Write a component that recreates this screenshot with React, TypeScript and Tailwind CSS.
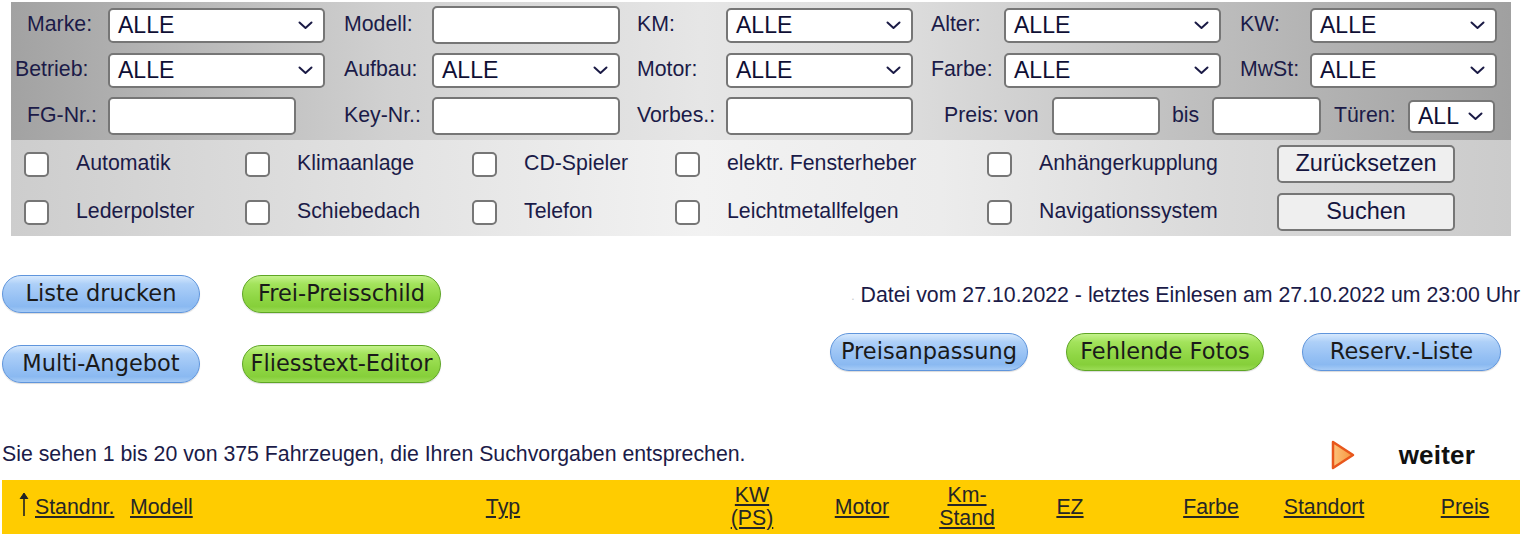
import React from "react";

const Chevron = () => (
  <svg width="15" height="9" viewBox="0 0 15 9" className="shrink-0">
    <polyline points="1.5,1.5 7.5,7 13.5,1.5" fill="none" stroke="#1a1a45" strokeWidth="2" strokeLinecap="round" strokeLinejoin="round" />
  </svg>
);

function Label({ cls, children }: { cls: string; children: React.ReactNode }) {
  return <div className={`shrink-0 text-[21.3px] text-[#1b1b48] whitespace-nowrap ${cls}`}>{children}</div>;
}

function Sel({ cls, text = "ALLE" }: { cls: string; text?: string }) {
  return (
    <div className={`shrink-0 flex items-center justify-between bg-white border-2 border-[#767676] rounded-[5px] pl-[8px] pr-[10px] ${cls}`}>
      <span className="text-[23px] text-[#0f0f35] leading-none">{text}</span>
      <Chevron />
    </div>
  );
}

function Inp({ cls }: { cls: string }) {
  return <div className={`shrink-0 bg-white border-2 border-[#767676] rounded-[5px] ${cls}`} />;
}

function Check({ cls, label }: { cls: string; label: string }) {
  return (
    <div className={`shrink-0 flex items-center ${cls}`}>
      <div className="w-[25px] h-[25px] bg-white border-2 border-[#767676] rounded-[5px]" />
      <span className="ml-[27px] text-[21.3px] text-[#1b1b48] whitespace-nowrap">{label}</span>
    </div>
  );
}

function Pill({ label, green, cls = "" }: { label: string; green?: boolean; cls?: string }) {
  const color = green
    ? "border-[#5ea624] bg-[linear-gradient(180deg,#c4f28c_0%,#a3e35c_22%,#8fd644_60%,#86cf3a_85%,#9bdc55_100%)]"
    : "border-[#5f95dc] bg-[linear-gradient(180deg,#d7e9fd_0%,#aed0f8_22%,#97c1f4_60%,#8ab9f1_85%,#a6cbf6_100%)]";
  return (
    <div
      className={`h-[38px] rounded-full border flex items-center justify-center font-['DejaVu_Sans',sans-serif] text-[22.5px] tracking-[0px] text-[#1a1a1a] shadow-[0_1px_1px_rgba(0,0,0,0.15)] ${color} ${cls}`}
    >
      {label}
    </div>
  );
}

function Arrow() {
  return (
    <svg width="12" height="26" viewBox="0 0 12 26" className="inline-block mr-[5px] -mt-[8px] align-middle">
      <line x1="6" y1="3" x2="6" y2="25" stroke="#222" strokeWidth="1.6" />
      <polyline points="2,8 6,2 10,8" fill="#222" stroke="#222" strokeWidth="1" />
    </svg>
  );
}

export default function App() {
  return (
    <div className="w-[1524px] h-[541px] bg-white overflow-hidden font-['Liberation_Sans',Arial,sans-serif]">
      {/* Filter panel */}
      <div className="ml-[11px] mt-[2px] w-[1500px]">
        <div className="pt-[4px] pb-[5px] bg-[linear-gradient(90deg,#a2a2a2_0%,#d0d0d0_25%,#e6e6e6_46%,#dcdcdc_60%,#c0c0c0_78%,#a0a0a0_100%)]">
          <div className="flex items-center h-[38px]">
            <Label cls="w-[97px] pl-[16px]">Marke:</Label>
            <Sel cls="w-[217px] h-[35px]" />
            <Label cls="w-[107px] pl-[19px]">Modell:</Label>
            <Inp cls="w-[188px] h-[38px]" />
            <Label cls="w-[106px] pl-[17px]">KM:</Label>
            <Sel cls="w-[187px] h-[35px]" />
            <Label cls="w-[91px] pl-[18px]">Alter:</Label>
            <Sel cls="w-[217px] h-[35px]" />
            <Label cls="w-[89px] pl-[19px]">KW:</Label>
            <Sel cls="w-[187px] h-[35px]" />
          </div>
          <div className="flex items-center h-[38px] mt-[7px]">
            <Label cls="w-[97px] pl-[4px]">Betrieb:</Label>
            <Sel cls="w-[217px] h-[35px]" />
            <Label cls="w-[107px] pl-[19px]">Aufbau:</Label>
            <Sel cls="w-[188px] h-[35px]" />
            <Label cls="w-[106px] pl-[17px]">Motor:</Label>
            <Sel cls="w-[187px] h-[35px]" />
            <Label cls="w-[91px] pl-[18px]">Farbe:</Label>
            <Sel cls="w-[217px] h-[35px]" />
            <Label cls="w-[89px] pl-[19px]">MwSt:</Label>
            <Sel cls="w-[187px] h-[35px]" />
          </div>
          <div className="flex items-center h-[38px] mt-[8px]">
            <Label cls="w-[97px] pl-[16px]">FG-Nr.:</Label>
            <Inp cls="w-[188px] h-[38px]" />
            <Label cls="w-[136px] pl-[48px]">Key-Nr.:</Label>
            <Inp cls="w-[188px] h-[38px]" />
            <Label cls="w-[106px] pl-[17px]">Vorbes.:</Label>
            <Inp cls="w-[187px] h-[38px]" />
            <Label cls="w-[139px] pl-[31px]">Preis: von</Label>
            <Inp cls="w-[108px] h-[38px]" />
            <Label cls="w-[52px] pl-[12px]">bis</Label>
            <Inp cls="w-[109px] h-[38px]" />
            <Label cls="w-[87px] pl-[13px]">Türen:</Label>
            <Sel cls="w-[87px] h-[33px]" text="ALL" />
          </div>
        </div>
        <div className="h-[96px] pl-[13px] flex bg-[linear-gradient(90deg,#cdcdcd_0%,#e2e2e2_25%,#f2f2f2_46%,#ececec_62%,#dadada_80%,#cbcbcb_100%)]">
          <div className="flex flex-col">
            <div className="flex h-[48px] items-center">
              <Check cls="w-[221px]" label="Automatik" />
              <Check cls="w-[227px]" label="Klimaanlage" />
              <Check cls="w-[203px]" label="CD-Spieler" />
              <Check cls="w-[312px]" label="elektr. Fensterheber" />
              <Check cls="w-[290px]" label="Anhängerkupplung" />
            </div>
            <div className="flex h-[48px] items-center">
              <Check cls="w-[221px]" label="Lederpolster" />
              <Check cls="w-[227px]" label="Schiebedach" />
              <Check cls="w-[203px]" label="Telefon" />
              <Check cls="w-[312px]" label="Leichtmetallfelgen" />
              <Check cls="w-[290px]" label="Navigationssystem" />
            </div>
          </div>
          <div className="flex flex-col">
            <div className="h-[48px] flex items-center">
              <div className="w-[178px] h-[38px] bg-[#efefef] border-2 border-[#767676] rounded-[5px] flex items-center justify-center text-[23.5px] text-[#15153f]">
                Zurücksetzen
              </div>
            </div>
            <div className="h-[48px] flex items-center">
              <div className="w-[178px] h-[38px] bg-[#efefef] border-2 border-[#767676] rounded-[5px] flex items-center justify-center text-[23.5px] text-[#15153f]">
                Suchen
              </div>
            </div>
          </div>
        </div>
      </div>

      {/* Action buttons */}
      <div className="flex justify-between mt-[39px] pl-[2px] pr-[4px]">
        <div className="grid grid-cols-[198px_199px] gap-x-[42px] gap-y-[32px]">
          <Pill label="Liste drucken" />
          <Pill label="Frei-Preisschild" green />
          <Pill label="Multi-Angebot" />
          <Pill label="Fliesstext-Editor" green />
        </div>
        <div className="flex flex-col items-end">
          <div className="mt-[9px] h-[24px] flex items-center text-[21.3px] text-[#1b1b48] whitespace-nowrap">
            <span className="text-[#c8c8c8] text-[12px] mr-[6px]">.</span>
            Datei vom 27.10.2022 - letztes Einlesen am 27.10.2022 um 23:00 Uhr
          </div>
          <div className="mt-[25px] mr-[19px] flex gap-x-[38px]">
            <Pill label="Preisanpassung" cls="w-[198px]" />
            <Pill label="Fehlende Fotos" green cls="w-[198px]" />
            <Pill label="Reserv.-Liste" cls="w-[199px]" />
          </div>
        </div>
      </div>

      {/* Result line */}
      <div className="mt-[56px] h-[32px] flex items-center pl-[2px]">
        <div className="text-[21.3px] text-[#1b1b48] whitespace-nowrap">
          Sie sehen 1 bis 20 von 375 Fahrzeugen, die Ihren Suchvorgaben entsprechen.
        </div>
        <div className="ml-auto flex items-center mr-[49px]">
          <svg width="24" height="30" viewBox="0 0 24 30">
            <defs>
              <linearGradient id="tri" x1="0" y1="0" x2="1" y2="0">
                <stop offset="0" stopColor="#fcc27a" />
                <stop offset="1" stopColor="#f7963c" />
              </linearGradient>
            </defs>
            <polygon points="2,2 22,15 2,28" fill="url(#tri)" stroke="#e8571c" strokeWidth="2.5" strokeLinejoin="round" />
          </svg>
          <span className="ml-[44px] text-[26px] font-bold tracking-[0.2px] text-[#111] leading-none">weiter</span>
        </div>
      </div>

      {/* Table header */}
      <div className="mt-[9px] ml-[2px] w-[1518px] h-[54px] bg-[#ffcc00] grid grid-cols-[123px_175px_406px_92px_128px_82px_124px_18px_122px_104px_34px_110px] items-center text-[21.3px] text-[#262626] leading-[23px]">
        <div className="pl-[16px] whitespace-nowrap">
          <Arrow />
          <span className="underline">Standnr.</span>
        </div>
        <div className="pl-[5px]"><span className="underline">Modell</span></div>
        <div className="text-center"><span className="underline">Typ</span></div>
        <div className="text-center"><span className="underline">KW</span><br /><span className="underline">(PS)</span></div>
        <div className="text-center"><span className="underline">Motor</span></div>
        <div className="text-center"><span className="underline">Km-</span><br /><span className="underline">Stand</span></div>
        <div className="text-center"><span className="underline">EZ</span></div>
        <div />
        <div className="text-center"><span className="underline">Farbe</span></div>
        <div className="text-center"><span className="underline">Standort</span></div>
        <div />
        <div className="text-center"><span className="underline">Preis</span></div>
      </div>
    </div>
  );
}
